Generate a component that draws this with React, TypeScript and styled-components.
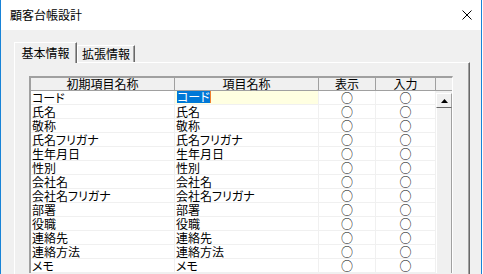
import React from 'react';
import styled, { createGlobalStyle } from 'styled-components';

const GlobalStyle = createGlobalStyle`
  html, body {
    margin: 0;
    padding: 0;
    background: #ffffff;
  }
  body {
    font-family: 'Noto Sans CJK JP', 'Noto Sans', sans-serif;
    color: #000000;
  }
`;

const Window = styled.div`
  width: 482px;
  height: 274px;
  box-sizing: border-box;
  border-left: 1px solid #1883d7;
  border-right: 1px solid #1883d7;
  display: flex;
  flex-direction: column;
  overflow: hidden;
  background: #f0f0f0;
`;

const TitleBar = styled.div`
  flex: none;
  height: 30px;
  background: #ffffff;
  display: flex;
  align-items: center;
  justify-content: space-between;
  padding: 0 9px 0 9px;
  font-size: 12px;
  line-height: 14px;
`;

const CloseIcon = styled.svg`
  width: 10px;
  height: 10px;
  display: block;
`;

const Body = styled.div`
  flex: 1;
  display: flex;
  flex-direction: column;
  padding: 12px 11px 0 13px;
`;

const TabStrip = styled.div`
  display: flex;
  align-items: flex-end;
  height: 20px;
  position: relative;
  z-index: 1;
`;

const Tab = styled.div<{ $active?: boolean; $width: number }>`
  box-sizing: border-box;
  width: ${p => p.$width}px;
  height: ${p => (p.$active ? 21 : 17)}px;
  margin-bottom: ${p => (p.$active ? -1 : 0)}px;
  background: #f0f0f0;
  border-top: 1px solid #ffffff;
  border-left: 1px solid #ffffff;
  border-right: 1px solid #696969;
  box-shadow: inset -1px 0 0 #a0a0a0;
  display: flex;
  align-items: center;
  justify-content: center;
  padding-bottom: ${p => (p.$active ? 1 : 0)}px;
  font-size: 12px;
  line-height: 14px;
`;

const Panel = styled.div`
  flex: 1;
  box-sizing: border-box;
  width: 456px;
  border-top: 1px solid #ffffff;
  border-left: 1px solid #ffffff;
  border-right: 1px solid #696969;
  box-shadow: inset -1px 0 0 #a0a0a0;
  padding: 13px 0 0 14px;
`;

const Grid = styled.div`
  display: flex;
  width: 424px;
  box-sizing: border-box;
  border-top: 2px solid #a0a0a0;
  border-left: 2px solid #a0a0a0;
  border-right: 1px solid #ffffff;
  background: #ffffff;
`;

const Columns = styled.div`
  display: flex;
  flex-direction: column;
  width: 405px;
`;

const RowBase = styled.div`
  display: grid;
  grid-template-columns: 144px 144px 57px 60px;
`;

const HeaderRow = styled(RowBase)`
  height: 13px;
  box-sizing: border-box;
  border-bottom: 1px solid #a0a0a0;
  background: #f0f0f0;
`;

const HeaderCell = styled.div`
  box-sizing: border-box;
  border-right: 1px solid #a0a0a0;
  text-align: center;
  font-size: 12px;
  line-height: 12px;
  white-space: nowrap;
`;

const DataRow = styled(RowBase)`
  height: 14px;
  box-sizing: border-box;
  border-bottom: 1px solid #f0f0f0;
`;

const Cell = styled.div<{ $center?: boolean; $current?: boolean }>`
  box-sizing: border-box;
  border-right: 1px solid #f0f0f0;
  background: ${p => (p.$current ? '#ffffe1' : '#ffffff')};
  padding-left: ${p => (p.$center ? 0 : 1)}px;
  text-align: ${p => (p.$center ? 'center' : 'left')};
  font-size: 12px;
  line-height: 13px;
  font-feature-settings: 'palt';
  white-space: nowrap;
`;

const Selection = styled.span`
  display: inline-block;
  height: 12px;
  margin: 0 0 0 1px;
  line-height: 12px;
  background: #0078d7;
  color: #ffffff;
  vertical-align: top;
  border-right: 1px solid #f08030;
`;

const ScrollColumn = styled.div`
  width: 16px;
  display: flex;
  flex-direction: column;
  background: #f0f0f0;
`;

const ScrollHeader = styled.div`
  height: 13px;
  box-sizing: border-box;
  border-bottom: 1px solid #a0a0a0;
`;

const ScrollTrack = styled.div`
  flex: 1;
  display: flex;
  flex-direction: column;
  padding-top: 2px;
`;

const ScrollButton = styled.div`
  height: 15px;
  box-sizing: border-box;
  border-top: 1px solid #ffffff;
  border-left: 1px solid #ffffff;
  border-right: 1px solid #a0a0a0;
  border-bottom: 1px solid #696969;
  display: flex;
  align-items: center;
  justify-content: center;
`;

const ScrollThumb = styled.div`
  flex: 1;
  box-sizing: border-box;
  border-left: 1px solid #ffffff;
  border-right: 1px solid #a0a0a0;
`;

const fields = [
  'コード',
  '氏名',
  '敬称',
  '氏名フリガナ',
  '生年月日',
  '性別',
  '会社名',
  '会社名フリガナ',
  '部署',
  '役職',
  '連絡先',
  '連絡方法',
  'メモ',
];

function App() {
  return (
    <>
      <GlobalStyle />
      <Window>
        <TitleBar>
          <span>顧客台帳設計</span>
          <CloseIcon viewBox="0 0 10 10">
            <path d="M0.5 0.5 L9.5 9.5 M9.5 0.5 L0.5 9.5" stroke="#000" strokeWidth="1" fill="none" />
          </CloseIcon>
        </TitleBar>
        <Body>
          <TabStrip>
            <Tab $active $width={63}>基本情報</Tab>
            <Tab $width={58}>拡張情報</Tab>
          </TabStrip>
          <Panel>
            <Grid>
              <Columns>
                <HeaderRow>
                  <HeaderCell>初期項目名称</HeaderCell>
                  <HeaderCell>項目名称</HeaderCell>
                  <HeaderCell>表示</HeaderCell>
                  <HeaderCell>入力</HeaderCell>
                </HeaderRow>
                {fields.map((name, i) => (
                  <DataRow key={name}>
                    <Cell>{name}</Cell>
                    <Cell $current={i === 0}>
                      {i === 0 ? <Selection>{name}</Selection> : name}
                    </Cell>
                    <Cell $center>○</Cell>
                    <Cell $center>○</Cell>
                  </DataRow>
                ))}
              </Columns>
              <ScrollColumn>
                <ScrollHeader />
                <ScrollTrack>
                  <ScrollButton>
                    <svg width="7" height="4" viewBox="0 0 7 4">
                      <path d="M3.5 0 L7 4 L0 4 Z" fill="#000" />
                    </svg>
                  </ScrollButton>
                  <ScrollThumb />
                </ScrollTrack>
              </ScrollColumn>
            </Grid>
          </Panel>
        </Body>
      </Window>
    </>
  );
}

export default App;
